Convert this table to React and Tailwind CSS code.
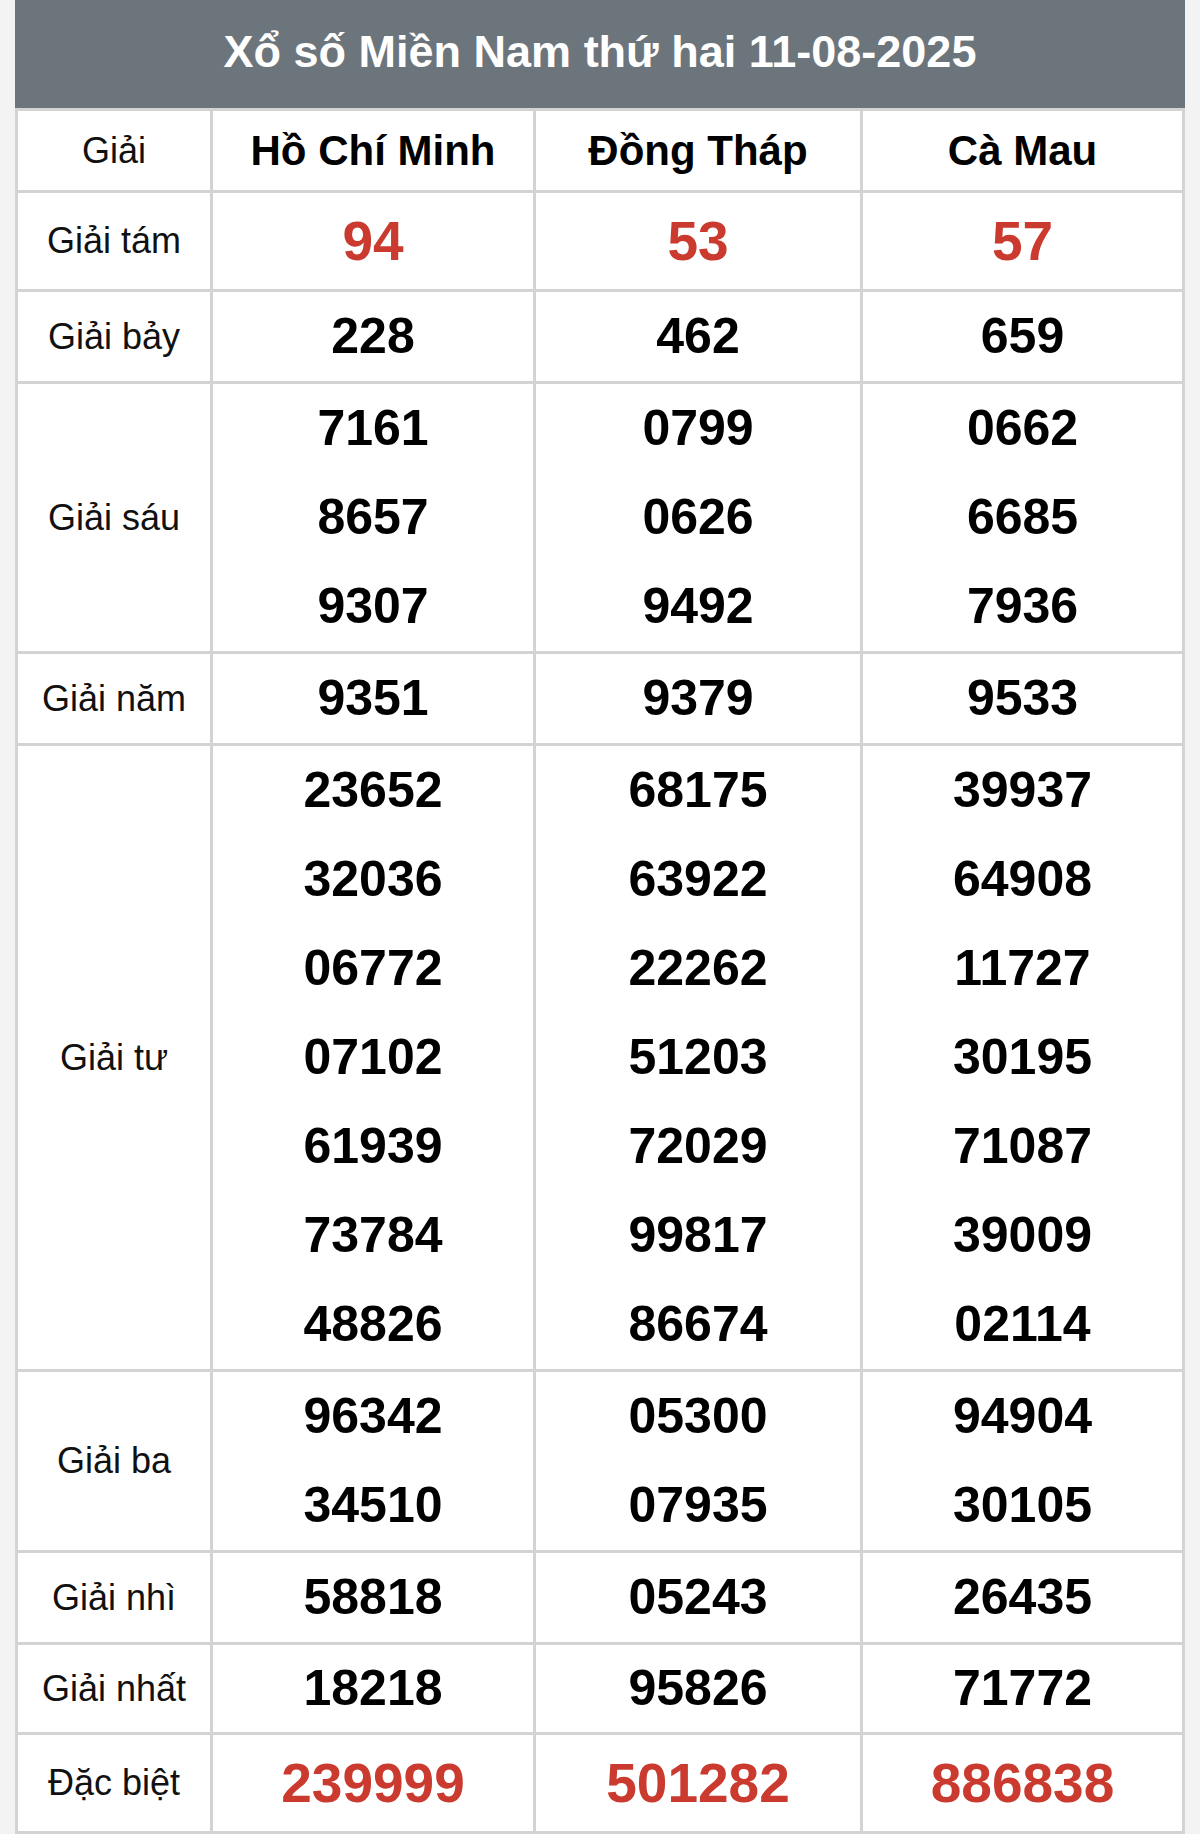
import React from 'react';

const rows = [
  { label: 'Giải tám', h: 'h-[96px] leading-[96px]', red: true, big: true, values: [['94'], ['53'], ['57']] },
  { label: 'Giải bảy', values: [['228'], ['462'], ['659']] },
  { label: 'Giải sáu', values: [['7161', '8657', '9307'], ['0799', '0626', '9492'], ['0662', '6685', '7936']] },
  { label: 'Giải năm', values: [['9351'], ['9379'], ['9533']] },
  {
    label: 'Giải tư',
    values: [
      ['23652', '32036', '06772', '07102', '61939', '73784', '48826'],
      ['68175', '63922', '22262', '51203', '72029', '99817', '86674'],
      ['39937', '64908', '11727', '30195', '71087', '39009', '02114'],
    ],
  },
  { label: 'Giải ba', values: [['96342', '34510'], ['05300', '07935'], ['94904', '30105']] },
  { label: 'Giải nhì', values: [['58818'], ['05243'], ['26435']] },
  { label: 'Giải nhất', h: 'h-[87px] leading-[87px]', values: [['18218'], ['95826'], ['71772']] },
  { label: 'Đặc biệt', h: 'h-[96px] leading-[96px]', red: true, big: true, values: [['239999'], ['501282'], ['886838']] },
];

const cell = 'border-[3px] border-[#d3d3d3] p-0 text-center align-middle';

export default function App() {
  return (
    <div className="min-h-[1834px] bg-[#f3f3f3] font-['Liberation_Sans',Arial,sans-serif]">
      <div className="mx-[15px] w-[1170px] border-b border-[#5b3b33]">
        {/* title bar */}
        <div className="flex h-[108px] items-center justify-center pb-[4px] bg-[#6c757c] text-[45px] font-bold text-white">
          Xổ số Miền Nam thứ hai 11-08-2025
        </div>

        <table className="w-full table-fixed border-collapse bg-white">
          <colgroup>
            <col className="w-[195px]" />
            <col className="w-[323px]" />
            <col className="w-[327px]" />
            <col />
          </colgroup>
          <thead>
            <tr>
              <th className={`${cell} h-[82px] text-[36px] font-normal text-[#111]`}>Giải</th>
              {['Hồ Chí Minh', 'Đồng Tháp', 'Cà Mau'].map((p) => (
                <th key={p} className={`${cell} h-[82px] text-[42px] font-bold text-black`}>
                  {p}
                </th>
              ))}
            </tr>
          </thead>
          <tbody>
            {rows.map((r) => (
              <tr key={r.label}>
                <td className={`${cell} text-[36px] text-[#111]`}>{r.label}</td>
                {r.values.map((col, i) => (
                  <td key={i} className={cell}>
                    {col.map((n, j) => (
                      <div
                        key={j}
                        className={`${r.h || 'h-[89px] leading-[89px]'} font-bold ${
                          r.big ? 'text-[55px]' : 'text-[50px]'
                        } ${r.red ? 'text-[#cb3a2f]' : 'text-black'}`}
                      >
                        {n}
                      </div>
                    ))}
                  </td>
                ))}
              </tr>
            ))}
          </tbody>
        </table>
      </div>
    </div>
  );
}
